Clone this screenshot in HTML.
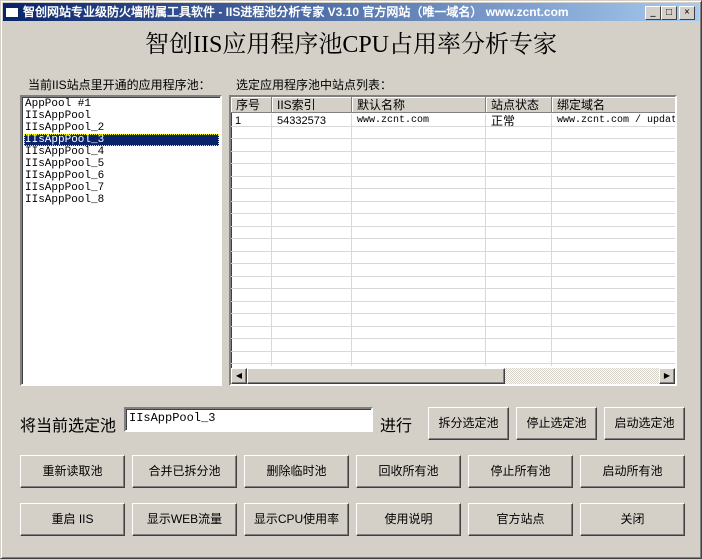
<!DOCTYPE html>
<html><head><meta charset="utf-8"><style>
*{box-sizing:border-box;margin:0;padding:0}
body{width:702px;height:559px;background:#d4d0c8;position:relative;overflow:hidden;font-family:"Liberation Serif","Noto Serif CJK SC","WenQuanYi Zen Hei",serif;font-size:12px;color:#000}
.a{position:absolute}
.win{left:0;top:0;width:702px;height:559px;border:1px solid;border-color:#d4d0c8 #404040 #404040 #d4d0c8;box-shadow:inset 1px 1px #fff,inset -1px -1px #808080}
.title{left:3px;top:3px;width:696px;height:18px;background:linear-gradient(90deg,#0a246a,#a6caf0);color:#fff;font-weight:bold;font-size:12px;line-height:18px;padding-left:20px;white-space:nowrap;font-family:"Liberation Sans","WenQuanYi Zen Hei",sans-serif}
.tb{top:6px;width:16px;height:14px;background:#d4d0c8;border:1px solid;border-color:#fff #404040 #404040 #fff;font-size:10px;line-height:11px;text-align:center;color:#000;font-weight:bold}
.sunk{border:2px solid;border-color:#808080 #fff #fff #808080;box-shadow:inset 1px 1px #404040;background:#fff}
.btn{background:#d4d0c8;border:1px solid;border-color:#fff #404040 #404040 #fff;box-shadow:inset -1px -1px #808080;text-align:center;font-family:"WenQuanYi Zen Hei","Liberation Sans",sans-serif;font-size:12px}
.li{left:2px;height:12px;line-height:12px;font-family:"Liberation Mono",monospace;font-size:11px;padding-left:1px;white-space:nowrap}
.cell{position:absolute;top:0;height:16px;line-height:16px;border-right:1px solid #808080;border-bottom:1px solid #808080;box-shadow:inset 1px 1px #fff;padding-left:5px;font-family:"WenQuanYi Zen Hei",sans-serif;font-size:12px;background:#d4d0c8}
.vl{position:absolute;top:17px;width:1px;height:252px;background:#d8d8d8}
.hl{position:absolute;left:0;width:446px;height:1px;background:#d8d8d8}
</style></head><body>
<div class="a win"></div>
<div class="a title">智创网站专业级防火墙附属工具软件 - IIS进程池分析专家 V3.10 官方网站（唯一域名） www.zcnt.com</div>
<div class="a" style="left:5px;top:5px;width:14px;height:13px;background:#fff;border:1px solid #0a246a;border-top:3px solid #0a246a"></div>
<div class="a tb" style="left:645px">_</div>
<div class="a tb" style="left:661px">□</div>
<div class="a tb" style="left:679px">×</div>
<div class="a" style="left:0;top:28px;width:702px;text-align:center;font-size:24px;font-family:'Liberation Serif','Noto Serif CJK SC',serif;line-height:34px">智创IIS应用程序池CPU占用率分析专家</div>
<div class="a" style="left:28px;top:76px;font-family:'WenQuanYi Zen Hei',sans-serif">当前IIS站点里开通的应用程序池：</div>
<div class="a" style="left:236px;top:76px;font-family:'WenQuanYi Zen Hei',sans-serif">选定应用程序池中站点列表：</div>
<div class="a sunk" style="left:20px;top:95px;width:202px;height:291px">
<div class="a li" style="top:1px">AppPool #1</div>
<div class="a li" style="top:13px">IIsAppPool</div>
<div class="a li" style="top:25px">IIsAppPool_2</div>
<div class="a li" style="top:37px;width:195px;background:#0a246a;color:#fff;outline:1px dotted #ff0;outline-offset:-1px">IIsAppPool_3</div>
<div class="a li" style="top:49px">IIsAppPool_4</div>
<div class="a li" style="top:61px">IIsAppPool_5</div>
<div class="a li" style="top:73px">IIsAppPool_6</div>
<div class="a li" style="top:85px">IIsAppPool_7</div>
<div class="a li" style="top:97px">IIsAppPool_8</div>
</div>
<div class="a sunk" style="left:229px;top:95px;width:448px;height:291px;overflow:hidden">
<div class="vl" style="left:40px"></div><div class="vl" style="left:120px"></div><div class="vl" style="left:254px"></div><div class="vl" style="left:320px"></div>
<div class="hl" style="top:29px"></div><div class="hl" style="top:41px"></div><div class="hl" style="top:54px"></div><div class="hl" style="top:66px"></div><div class="hl" style="top:79px"></div><div class="hl" style="top:91px"></div><div class="hl" style="top:104px"></div><div class="hl" style="top:116px"></div><div class="hl" style="top:129px"></div><div class="hl" style="top:141px"></div><div class="hl" style="top:154px"></div><div class="hl" style="top:166px"></div><div class="hl" style="top:179px"></div><div class="hl" style="top:191px"></div><div class="hl" style="top:204px"></div><div class="hl" style="top:216px"></div><div class="hl" style="top:229px"></div><div class="hl" style="top:241px"></div><div class="hl" style="top:254px"></div><div class="hl" style="top:266px"></div>
<div class="cell" style="left:0;width:41px">序号</div>
<div class="cell" style="left:41px;width:80px">IIS索引</div>
<div class="cell" style="left:121px;width:134px">默认名称</div>
<div class="cell" style="left:255px;width:66px">站点状态</div>
<div class="cell" style="left:321px;width:130px">绑定域名</div>
<div class="a" style="top:18px;left:4px;font-family:'Liberation Sans';font-size:11px">1</div>
<div class="a" style="top:18px;left:46px;font-family:'Liberation Sans';font-size:11px">54332573</div>
<div class="a" style="top:18px;left:126px;font-family:'Liberation Mono';font-size:10px">www.zcnt.com</div>
<div class="a" style="top:15px;left:260px;font-family:'WenQuanYi Zen Hei'">正常</div>
<div class="a" style="top:18px;left:326px;font-family:'Liberation Mono';font-size:10px;white-space:nowrap">www.zcnt.com / updat</div>
<div class="a" style="left:0;top:271px;width:444px;height:16px;background:repeating-conic-gradient(#d4d0c8 0 25%,#fff 0 50%) 0 0/2px 2px"></div>
<div class="a btn" style="left:0;top:271px;width:16px;height:16px;font-size:8px;line-height:14px">◀</div>
<div class="a btn" style="left:16px;top:271px;width:258px;height:16px"></div>
<div class="a btn" style="left:428px;top:271px;width:16px;height:16px;font-size:8px;line-height:14px">▶</div>
</div>
<div class="a" style="left:20px;top:412px;font-size:16px;font-family:'WenQuanYi Zen Hei',sans-serif">将当前选定池</div>
<div class="a sunk" style="left:124px;top:407px;width:249px;height:25px;padding:2px 3px;font-family:'Liberation Mono',monospace;font-size:12px">IIsAppPool_3</div>
<div class="a" style="left:380px;top:412px;font-size:16px;font-family:'WenQuanYi Zen Hei',sans-serif">进行</div>
<div class="a btn" style="left:428px;top:407px;width:81px;height:33px;line-height:31px">拆分选定池</div>
<div class="a btn" style="left:516px;top:407px;width:81px;height:33px;line-height:31px">停止选定池</div>
<div class="a btn" style="left:604px;top:407px;width:81px;height:33px;line-height:31px">启动选定池</div>
<div class="a btn" style="left:20px;top:455px;width:105px;height:33px;line-height:31px">重新读取池</div>
<div class="a btn" style="left:132px;top:455px;width:105px;height:33px;line-height:31px">合并已拆分池</div>
<div class="a btn" style="left:244px;top:455px;width:105px;height:33px;line-height:31px">删除临时池</div>
<div class="a btn" style="left:356px;top:455px;width:105px;height:33px;line-height:31px">回收所有池</div>
<div class="a btn" style="left:468px;top:455px;width:105px;height:33px;line-height:31px">停止所有池</div>
<div class="a btn" style="left:580px;top:455px;width:105px;height:33px;line-height:31px">启动所有池</div>
<div class="a btn" style="left:20px;top:503px;width:105px;height:33px;line-height:31px">重启 IIS</div>
<div class="a btn" style="left:132px;top:503px;width:105px;height:33px;line-height:31px">显示WEB流量</div>
<div class="a btn" style="left:244px;top:503px;width:105px;height:33px;line-height:31px">显示CPU使用率</div>
<div class="a btn" style="left:356px;top:503px;width:105px;height:33px;line-height:31px">使用说明</div>
<div class="a btn" style="left:468px;top:503px;width:105px;height:33px;line-height:31px">官方站点</div>
<div class="a btn" style="left:580px;top:503px;width:105px;height:33px;line-height:31px">关闭</div>
</body></html>
